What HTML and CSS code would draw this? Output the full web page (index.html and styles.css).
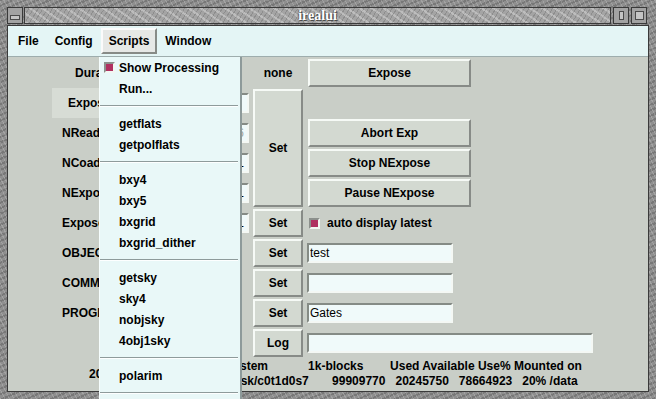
FILE: index.html
```html
<!DOCTYPE html>
<html lang="en">
<head>
  <meta charset="UTF-8" />
  <meta name="viewport" content="width=device-width, initial-scale=1.0" />
  <title>irealui</title>
  <link rel="stylesheet" href="styles.css">
</head>
<body>
  <div class="frame">
    <div class="titlebar">
      <span class="tb-btn tb-iconify"><span></span></span>
      <div class="tb-title">irealui</div>
      <span class="tb-btn tb-max"><span></span></span>
      <span class="tb-btn tb-close"><span></span></span>
    </div>

    <div class="client">
      <div class="menubar">
        <span class="mb-item">File</span>
        <span class="mb-item">Config</span>
        <span class="mb-item active">Scripts</span>
        <span class="mb-item">Window</span>
      </div>

      <div class="panel">
        <span class="label c1 indent">Duration</span>
        <span class="label c3 center">none</span>
        <button class="btn c4 wide">Expose</button>

        <span class="optmenu c1">Exposure</span>
        <input class="entry num c2" type="text" value="" />
        <button class="btn c3 tall">Set</button>

        <span class="label c1">NReads</span>
        <input class="entry num c2" type="text" value="6" disabled />
        <button class="btn c4 wide">Abort Exp</button>

        <span class="label c1">NCoadds</span>
        <input class="entry num c2" type="text" value="1" />
        <button class="btn c4 wide">Stop NExpose</button>

        <span class="label c1">NExposures</span>
        <input class="entry num c2" type="text" value="1" />
        <button class="btn c4 wide">Pause NExpose</button>

        <span class="label c1">Expose Time</span>
        <input class="entry num c2" type="text" value="1" />
        <button class="btn c3">Set</button>
        <label class="checkbutton c4"><span class="checkbox on"></span>auto display latest</label>

        <span class="label c1">OBJECT</span>
        <button class="btn c3">Set</button>
        <input class="entry text c4" type="text" value="test" />

        <span class="label c1">COMMENT</span>
        <button class="btn c3">Set</button>
        <input class="entry text c4" type="text" value="" />

        <span class="label c1">PROGRAM</span>
        <button class="btn c3">Set</button>
        <input class="entry text c4" type="text" value="Gates" />

        <button class="btn c3">Log</button>
        <input class="entry log c45" type="text" value="" />

        <span class="label c1 disk">20%</span>
        <pre class="df c25">Filesystem            1k-blocks        Used Available Use% Mounted on
/dev/dsk/c0t1d0s7       99909770   20245750   78664923   20% /data</pre>
      </div>
    </div>
  </div>

  <!-- Scripts menu, posted open -->
  <div class="menu">
    <div class="menu-item check"><span class="checkbox on"></span>Show Processing</div>
    <div class="menu-item">Run...</div>
    <div class="menu-sep"></div>
    <div class="menu-item">getflats</div>
    <div class="menu-item">getpolflats</div>
    <div class="menu-sep"></div>
    <div class="menu-item">bxy4</div>
    <div class="menu-item">bxy5</div>
    <div class="menu-item">bxgrid</div>
    <div class="menu-item">bxgrid_dither</div>
    <div class="menu-sep"></div>
    <div class="menu-item">getsky</div>
    <div class="menu-item">sky4</div>
    <div class="menu-item">nobjsky</div>
    <div class="menu-item">4obj1sky</div>
    <div class="menu-sep"></div>
    <div class="menu-item">polarim</div>
    <div class="menu-sep"></div>
  </div>
</body>
</html>
```

FILE: styles.css
```css
* {
  box-sizing: border-box;
}

body {
  margin: 0;
  width: 656px;
  height: 399px;
  overflow: hidden;
  position: relative;
  font: bold 12px "Liberation Sans", Arial, sans-serif;
  color: #000;
}

/* window manager frame */
.frame {
  height: 399px;
  padding: 6px 7px 7px;
  display: flex;
  flex-direction: column;
  background-color: #8f8f8f;
  background-image:
    repeating-linear-gradient(63deg, rgba(255,255,255,0.18) 0 1px, transparent 1px 4px),
    repeating-linear-gradient(-24deg, rgba(0,0,0,0.16) 0 2px, transparent 2px 5px);
}

.titlebar {
  height: 19px;
  display: flex;
  align-items: flex-start;
  padding-top: 1px;
}

.tb-btn {
  width: 16px;
  height: 17px;
  border: 1px solid #3a3a3a;
  background: #a2a2a2;
  display: flex;
  align-items: center;
  justify-content: center;
  flex-shrink: 0;
}

.tb-btn span {
  display: block;
  border: 1px solid #4a4a4a;
  background: #c4c4c4;
}

.tb-iconify {
  margin-right: 1px;
  align-items: flex-end;
  padding-bottom: 3px;
}

.tb-iconify span {
  width: 10px;
  height: 5px;
}

.tb-max {
  margin-left: 2px;
}

.tb-max span {
  width: 5px;
  height: 9px;
}

.tb-close {
  margin-left: 2px;
  margin-right: 2px;
}

.tb-close span {
  width: 9px;
  height: 9px;
}

.tb-title {
  flex: 1;
  height: 17px;
  border: 1px solid #3a3a3a;
  text-align: center;
  font: bold 14px "Liberation Serif", serif;
  line-height: 15px;
  color: #fff;
  text-shadow: 1px 1px 0 #4a4a4a, -1px 0 0 #6a6a6a;
  background-color: #a4a4a4;
  background-image:
    repeating-linear-gradient(35deg, rgba(255,255,255,0.28) 0 2px, transparent 2px 7px),
    repeating-linear-gradient(-58deg, rgba(0,0,0,0.14) 0 1px, transparent 1px 4px);
}

/* application window */
.client {
  flex: 1;
  border: 1px solid #3a3a3a;
  display: flex;
  flex-direction: column;
  background: #c9cec7;
}

.menubar {
  height: 31px;
  display: flex;
  align-items: center;
  padding-left: 2px;
  background: #e4f5f5;
  border-bottom: 1px solid #9eadad;
}

.mb-item {
  height: 26px;
  padding: 0 6px;
  line-height: 22px;
  border: 2px solid transparent;
}

.mb-item.active {
  background: #e6e8e6;
  border-color: #fbfbfb #878b87 #878b87 #fbfbfb;
}

.panel {
  flex: 1;
  display: grid;
  grid-template-columns: 150px 43px 50px 164px 118px;
  grid-template-rows: repeat(10, 28px) auto;
  gap: 2px 4px;
  align-content: start;
  padding: 2px 0 0 44px;
}

.c1 { grid-column: 1; }
.c2 { grid-column: 2; }
.c3 { grid-column: 3; }
.c4 { grid-column: 4; }
.c45 { grid-column: 4 / span 2; }
.c25 { grid-column: 2 / span 4; }

.label {
  align-self: center;
  padding-left: 10px;
  white-space: nowrap;
}

.label.indent {
  padding-left: 23px;
}

.label.center {
  padding-left: 0;
  text-align: center;
}

.label.disk {
  padding-left: 37px;
}

.optmenu {
  margin: -1px 0;
  padding-left: 16px;
  display: flex;
  align-items: center;
  background: #d7dcd5;
}

.btn {
  margin: 0;
  padding: 0;
  font: inherit;
  color: #000;
  background: #d3d9d1;
  border: 2px solid;
  border-color: #f6faf6 #878b87 #878b87 #f6faf6;
  display: flex;
  align-items: center;
  justify-content: center;
}

.btn.wide {
  margin-left: 1px;
}

.btn.tall {
  grid-row: span 4;
}

.entry {
  height: 20px;
  align-self: center;
  margin: 0;
  padding: 0 1px;
  font: 12px "Liberation Sans", Arial, sans-serif;
  color: #000;
  background: #f0fafa;
  border: 2px solid;
  border-color: #858b85 #f4f8f4 #f4f8f4 #858b85;
  outline: none;
}

.entry.num {
  width: 43px;
  text-align: right;
  padding-right: 3px;
}

.entry:disabled {
  color: #a4aaa4;
}

.entry.text {
  width: 146px;
  justify-self: start;
}

.entry.log {
  width: 286px;
  justify-self: start;
}

.checkbutton {
  display: flex;
  align-items: center;
  gap: 7px;
  padding-left: 2px;
}

.checkbox {
  width: 11px;
  height: 11px;
  flex-shrink: 0;
  border: 2px solid;
  border-color: #8c908c #f2f6f2 #f2f6f2 #8c908c;
  background: #f0fafa;
}

.checkbox.on {
  background: #b03060;
}

.df {
  margin: 0;
  font: inherit;
  line-height: 15px;
  white-space: pre;
}

/* posted Scripts menu */
.menu {
  position: absolute;
  left: 99px;
  top: 57px;
  width: 143px;
  height: 342px;
  background: #e9f8f8;
  border-left: 1px solid #f6fefe;
  border-right: 2px solid #8d9a9a;
}

.menu-item {
  height: 21px;
  display: flex;
  align-items: center;
  padding-left: 19px;
  white-space: nowrap;
}

.menu-item.check {
  padding-left: 4px;
  gap: 4px;
}

.menu-sep {
  height: 2px;
  margin: 6px 2px 6px 0;
  border-top: 1px solid #8e9b9b;
  border-bottom: 1px solid #fdffff;
}
```
